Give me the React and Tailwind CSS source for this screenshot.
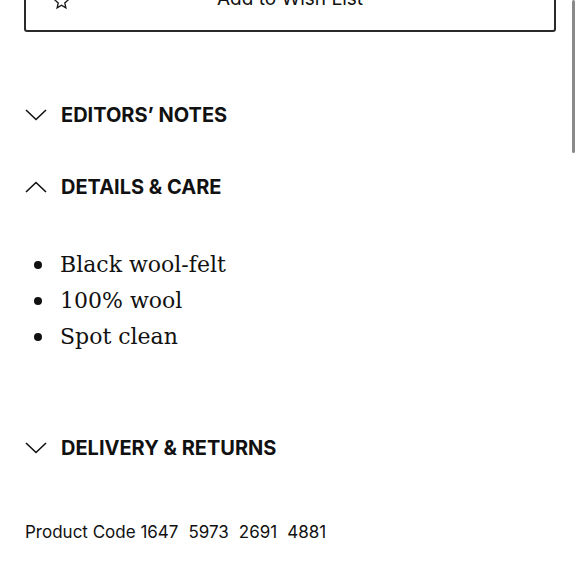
import React from "react";

const Chevron = ({ up }) => (
  <svg width="22" height="12" viewBox="0 0 22 12" className="shrink-0">
    {up ? (
      <polyline points="1,11 11,1.5 21,11" fill="none" stroke="#111" strokeWidth="1.6" />
    ) : (
      <polyline points="1,1 11,10.5 21,1" fill="none" stroke="#111" strokeWidth="1.6" />
    )}
  </svg>
);

const Heading = ({ up, children }) => (
  <div className="flex items-center gap-[14px] pl-[25px] h-[30px]">
    <Chevron up={up} />
    <span className="text-[20px] font-bold text-[#111] tracking-[0px] leading-none">{children}</span>
  </div>
);

export default function App() {
  const font = { fontFamily: "Inter, 'Liberation Sans', sans-serif" };
  return (
    <div className="relative w-[580px] h-[580px] overflow-hidden bg-white" style={font}>
      <div className="pl-[24px] w-[580px]">
        <div className="-mt-[30px] h-[62px] w-[532px] border-2 border-[#2a2a2a] rounded-[3px] relative">
          <svg width="17" height="17" viewBox="0 0 24 24" className="absolute left-[27px] top-[21px]">
            <polygon points="12,2 14.9,8.6 22,9.3 16.6,14 18.2,21 12,17.3 5.8,21 7.4,14 2,9.3 9.1,8.6" fill="none" stroke="#111" strokeWidth="1.8" strokeLinejoin="miter" />
          </svg>
          <span className="absolute left-0 right-0 top-[17px] text-center text-[19px] text-[#111] leading-none">Add to Wish List</span>
        </div>
      </div>

      <div className="mt-[68px]">
        <Heading>EDITORS’ NOTES</Heading>
      </div>
      <div className="mt-[42px]">
        <Heading up>DETAILS &amp; CARE</Heading>
      </div>

      <ul className="mt-[45px] pl-[60px] text-[22px] text-[#111] leading-[36px]" style={{ fontFamily: "'DejaVu Serif', Georgia, 'Liberation Serif', serif", fontVariantNumeric: "oldstyle-nums" }}>
        {["Black wool-felt", "100% wool", "Spot clean"].map((t) => (
          <li key={t} className="relative">
            <span className="absolute -left-[26px] top-[14px] w-[8px] h-[8px] rounded-full bg-[#111]" />
            {t}
          </li>
        ))}
      </ul>

      <div className="mt-[78px]">
        <Heading>DELIVERY &amp; RETURNS</Heading>
      </div>

      <div className="mt-[61px] pl-[25px] text-[17px] text-[#111] leading-none">
        Product Code 1647<span className="ml-[10px]">5973</span><span className="ml-[10px]">2691</span><span className="ml-[10px]">4881</span>
      </div>

      <div className="absolute right-[5px] top-0 w-[3px] h-[153px] rounded-full bg-[#8a8a8a]" />
    </div>
  );
}
